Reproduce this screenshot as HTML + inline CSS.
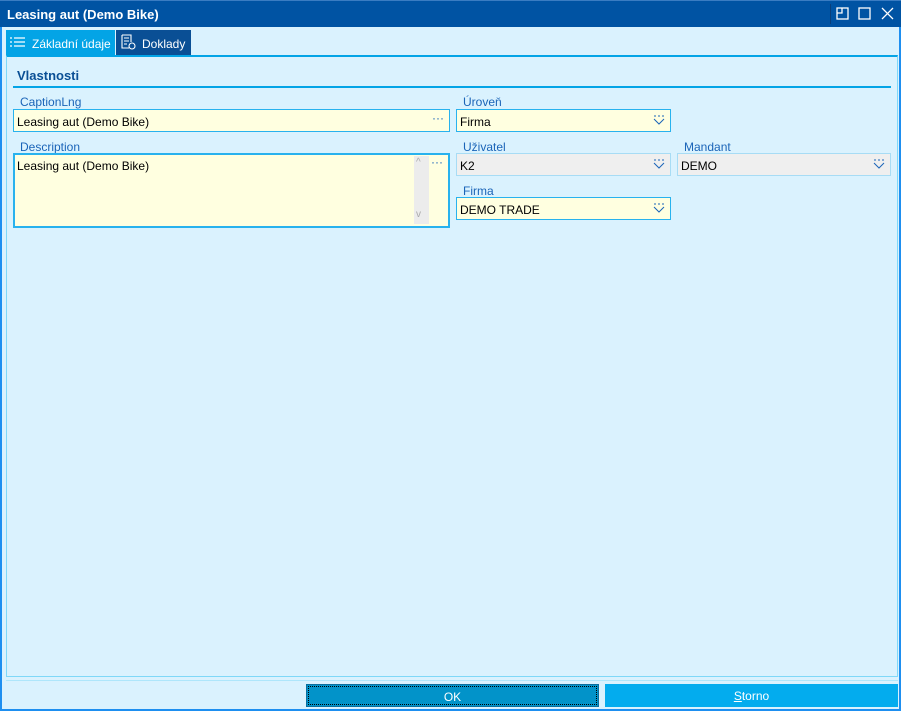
<!DOCTYPE html>
<html><head><meta charset="utf-8"><style>
*{margin:0;padding:0;box-sizing:border-box}
body{width:901px;height:711px;background:#daf2fe;font-family:"Liberation Sans",sans-serif;font-size:12px;position:relative;overflow:hidden}
.a{position:absolute}
.lbl{position:absolute;color:#1a64b8;font-size:12px}
.fld{position:absolute;height:23px;border:1px solid #28b2ee;background:#ffffe0;color:#000;padding:5px 0 0 3px;font-size:12px}
.ro{background:#efefef;border-color:#a7dcf5}
.dd{position:absolute;right:5px;top:5px}
</style></head><body>
<div class="a" style="left:0;top:0;width:901px;height:711px;border:2px solid #1e8ff0;border-top:none"></div>
<div class="a" style="left:0;top:0;width:901px;height:27px;background:#0053a3;border-top:1px solid #3a7cc2"></div>
<div class="a" style="left:7px;top:7px;color:#fff;font-weight:bold;font-size:13px">Leasing aut (Demo Bike)</div>
<div class="a" style="left:830px;top:4px;width:1px;height:20px;background:#0a3f7a"></div>
<svg class="a" style="left:836px;top:7px" width="60" height="14" fill="none" stroke="#fff" stroke-width="1.3">
<rect x="1" y="1" width="11" height="11"/><path d="M6 1V6H1"/>
<rect x="23" y="1" width="11" height="11"/>
<path d="M46 1L57 12M57 1L46 12"/></svg>
<div class="a" style="left:6px;top:30px;width:109px;height:25px;background:#03a4e6"></div>
<svg class="a" style="left:9px;top:36px" width="18" height="12" stroke="#fff" stroke-width="1.2"><path d="M1 2h2M5 2h11M1 6h2M5 6h11M1 10h2M5 10h11"/></svg>
<div class="a" style="left:32px;top:37px;color:#fff">Základní údaje</div>
<div class="a" style="left:116px;top:30px;width:75px;height:25px;background:#0a4f95"></div>
<svg class="a" style="left:120px;top:34px" width="16" height="16" fill="none" stroke="#fff" stroke-width="1.1"><path d="M2 1h9v7M2 1v13h7M4 4h5M4 7h5M4 10h3"/><circle cx="12" cy="12" r="3"/></svg>
<div class="a" style="left:142px;top:37px;color:#fff">Doklady</div>
<div class="a" style="left:6px;top:55px;width:892px;height:622px;border:1px solid #7fd8f8;border-top:2px solid #03a4e6"></div>
<div class="a" style="left:17px;top:68px;color:#0a4f95;font-weight:bold;font-size:13px">Vlastnosti</div>
<div class="a" style="left:13px;top:86px;width:878px;height:2px;background:#03a4e6"></div>

<div class="lbl" style="left:20px;top:95px">CaptionLng</div>
<div class="fld" style="left:13px;top:109px;width:437px">Leasing aut (Demo Bike)<span class="a" style="right:5px;top:1px;color:#1a64b8">···</span></div>
<div class="lbl" style="left:20px;top:140px">Description</div>
<div class="fld" style="left:13px;top:153px;width:437px;height:75px;border-width:2px;padding:4px 0 0 2px">Leasing aut (Demo Bike)
<div class="a" style="left:399px;top:1px;width:15px;height:68px;background:#ececec"></div>
<span class="a" style="left:401px;top:2px;color:#aaa;font-size:10px">^</span>
<span class="a" style="left:401px;top:54px;color:#aaa;font-size:10px">v</span>
<span class="a" style="right:5px;top:0px;color:#1a64b8">···</span></div>

<div class="lbl" style="left:463px;top:95px">Úroveň</div>
<div class="fld" style="left:456px;top:109px;width:215px">Firma<svg class="dd" width="12" height="10" fill="none" stroke="#1a64b8"><path d="M1 1h2M5 1h2M9 1h2M1 4l5 5 5-5"/></svg></div>
<div class="lbl" style="left:463px;top:140px">Uživatel</div>
<div class="fld ro" style="left:456px;top:153px;width:215px">K2<svg class="dd" width="12" height="10" fill="none" stroke="#1a64b8"><path d="M1 1h2M5 1h2M9 1h2M1 4l5 5 5-5"/></svg></div>
<div class="lbl" style="left:684px;top:140px">Mandant</div>
<div class="fld ro" style="left:677px;top:153px;width:214px">DEMO<svg class="dd" width="12" height="10" fill="none" stroke="#1a64b8"><path d="M1 1h2M5 1h2M9 1h2M1 4l5 5 5-5"/></svg></div>
<div class="lbl" style="left:463px;top:184px">Firma</div>
<div class="fld" style="left:456px;top:197px;width:215px">DEMO TRADE<svg class="dd" width="12" height="10" fill="none" stroke="#1a64b8"><path d="M1 1h2M5 1h2M9 1h2M1 4l5 5 5-5"/></svg></div>

<div class="a" style="left:6px;top:680px;width:892px;height:1px;background:#aee6fb"></div>
<div class="a" style="left:306px;top:684px;width:293px;height:23px;background:#0293c9;color:#fff;text-align:center;padding-top:5px;outline:1px dotted #000;outline-offset:-3px;border:1px solid #0a6fa0">OK</div>
<div class="a" style="left:605px;top:684px;width:293px;height:23px;background:#03acee;color:#fff;text-align:center;padding-top:5px"><u>S</u>torno</div>
</body></html>
